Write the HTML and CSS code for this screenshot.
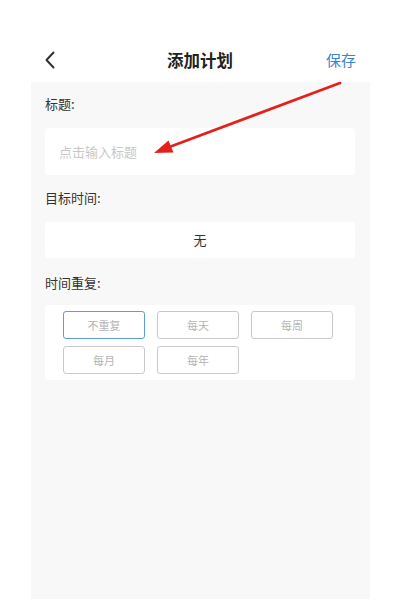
FILE: index.html
```html
<!DOCTYPE html>
<html lang="zh">
<head>
<meta charset="utf-8">
<link rel="stylesheet" href="styles.css">
</head>
<body>
<div class="page">
  <header class="nav">
    <span class="back">
      <svg width="12" height="18" viewBox="0 0 12 18"><path d="M9.5 1.5 L2.5 9 L9.5 16.5" fill="none" stroke="#333" stroke-width="2" stroke-linecap="round" stroke-linejoin="round"/></svg>
    </span>
    <span class="title">添加计划</span>
    <span class="save">保存</span>
  </header>
  <main class="panel">
    <div class="label">标题:</div>
    <div class="input">点击输入标题</div>
    <div class="label">目标时间:</div>
    <div class="box center">无</div>
    <div class="label l3">时间重复:</div>
    <div class="box repeat">
      <div class="btn active">不重复</div>
      <div class="btn">每天</div>
      <div class="btn">每周</div>
      <div class="btn">每月</div>
      <div class="btn">每年</div>
    </div>
  </main>
  <svg class="arrow" width="400" height="600" viewBox="0 0 400 600">
    <line x1="340" y1="83" x2="168" y2="147.5" stroke="#e3211b" stroke-width="2.6" stroke-linecap="round"/>
    <polygon points="154,153 173.5,152.5 168.5,140.5" fill="#e3211b"/>
  </svg>
</div>
</body>
</html>
```
FILE: styles.css
```css
* { box-sizing: border-box; }
html, body { margin: 0; padding: 0; background: #fff; }
body { font-family: "Noto Sans CJK SC", "Noto Sans", sans-serif; color: #333; }
.page { position: relative; width: 400px; height: 600px; overflow: hidden; }
.nav {
  height: 82px;
  padding-top: 40px;
  display: grid;
  grid-template-columns: 1fr auto 1fr;
  align-items: start;
}
.back { padding-left: 44px; height: 40px; display: flex; align-items: center; }
.back svg { display: block; }
.title { height: 40px; line-height: 40px; font-size: 16.5px; font-weight: 700; color: #222; }
.save { height: 40px; line-height: 40px; font-size: 15px; color: #3a82d6; text-align: right; padding-right: 44px; }
.panel {
  margin: 0 30px 0 31px;
  height: 517px;
  background: #f8f8f8;
  padding: 12px 15px 0 14px;
}
.label { height: 20px; line-height: 20px; font-size: 13px; color: #333; margin-bottom: 14px; }
.label.l3 { margin-bottom: 12px; }
.input {
  height: 47px; background: #fff; border-radius: 4px;
  padding-left: 14px; line-height: 47px; font-size: 13px; color: #c8c8c8;
  margin-bottom: 13px;
}
.box { background: #fff; border-radius: 4px; }
.center { height: 36px; line-height: 36px; text-align: center; font-size: 13px; color: #333; margin-bottom: 15px; }
.repeat {
  height: 75px;
  padding: 6px 0 0 18px;
  display: grid;
  grid-template-columns: repeat(3, 82px);
  grid-auto-rows: 28px;
  column-gap: 12px;
  row-gap: 7px;
}
.btn {
  border: 1px solid #c9c9c9; border-radius: 3px;
  display: flex; align-items: center; justify-content: center;
  font-size: 11px; color: #b5b5b5;
}
.btn.active { border-color: #5b9de0; }
.arrow { position: absolute; left: 0; top: 0; pointer-events: none; }
```
